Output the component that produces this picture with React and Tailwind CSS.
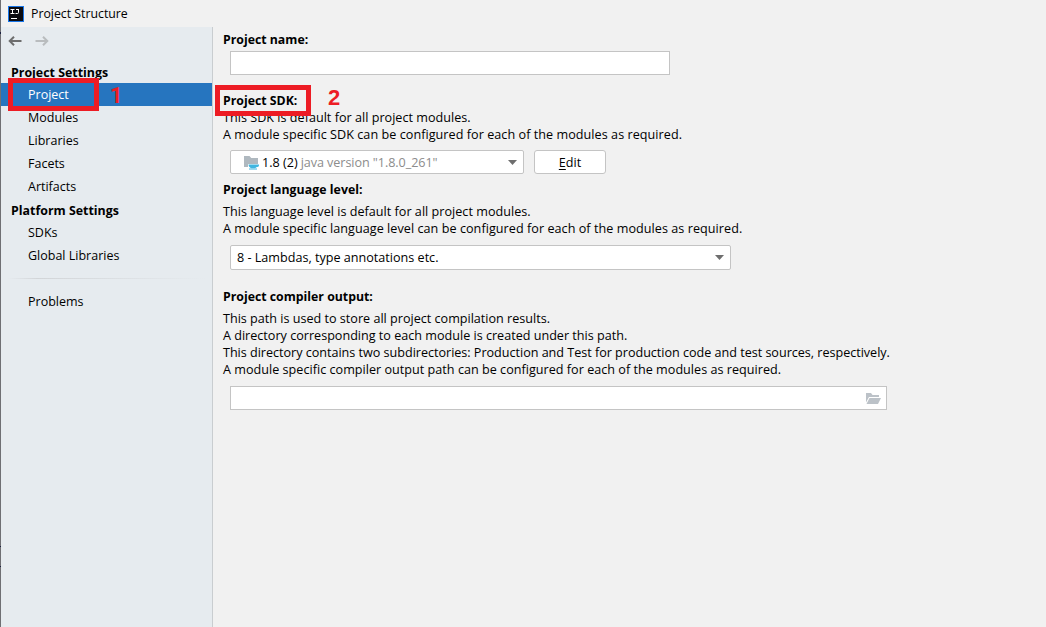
const projectItems = ['Project', 'Modules', 'Libraries', 'Facets', 'Artifacts'];
const platformItems = ['SDKs', 'Global Libraries'];

function NavItem({ label, active }) {
  return (
    <li
      className={`h-[23px] pl-[27px] text-[12.5px] leading-[23px] ${
        active ? 'bg-[#2675bf] text-white' : 'text-black'
      }`}
    >
      {label}
    </li>
  );
}

function Arrow({ className, flip }) {
  return (
    <svg width="14" height="12" viewBox="0 0 14 12" className={`${className} ${flip ? '-scale-x-100' : ''}`}>
      <path d="M13.5 6H1.8M6 1.7 1.7 6 6 10.3" fill="none" stroke="currentColor" strokeWidth="2" />
    </svg>
  );
}

function Caret() {
  return (
    <svg width="9" height="5" viewBox="0 0 9 5" className="shrink-0">
      <path d="M0 0h9L4.5 5z" fill="#6e6e6e" />
    </svg>
  );
}

function AppLogo() {
  return (
    <svg width="16" height="16" viewBox="0 0 16 16">
      <rect width="16" height="16" fill="#1875e8" />
      <rect x="1" y="1" width="14" height="14" fill="#0b0b10" />
      <path
        d="M2.5 3.5h4M4.5 3.5v4M2.5 7.5h4M8 3.5h3M10.5 3v3.5q0 1-1 1H7.5"
        fill="none"
        stroke="#fff"
        strokeWidth="1"
      />
      <path d="M3 12.5h6" stroke="#fff" strokeWidth="1" />
    </svg>
  );
}

function JdkIcon() {
  return (
    <svg width="16" height="15" viewBox="0 0 16 15" className="shrink-0">
      <path d="M0 1h5.5l1.7 2H14v6H4v3H0z" fill="#afb8bf" />
      <path d="M4.5 9.5H15q.5 2.5-2.7 2.7-.8 1-1.8 1H7.5q-2.6-.5-3-3.7z" fill="#40b6e0" />
      <path d="M5 14h8" stroke="#40b6e0" strokeWidth="1" />
    </svg>
  );
}

function FolderIcon() {
  return (
    <svg width="15" height="12" viewBox="0 0 15 12" className="mt-px shrink-0">
      <path d="M0 0h5l1.5 2H13v2H3L0 9.5z" fill="#bcc2c8" />
      <path d="M3.5 5H15l-3 6H.5z" fill="#bcc2c8" />
    </svg>
  );
}

function Label({ children }) {
  return <h2 className="h-[17px] text-[12.3px] leading-[17px] font-bold">{children}</h2>;
}

export default function App() {
  return (
    <div className="relative flex h-[627px] w-[1046px] overflow-hidden bg-[#f1f1f1] font-['Open_Sans','Noto_Sans',sans-serif] whitespace-nowrap text-black">
      {/* Sliver of the window behind */}
      <div className="w-px shrink-0 bg-[#6f6f73]">
        <div className="mt-[32px] h-[2px] bg-[#1b2140]" />
        <div className="mt-[512px] h-px bg-[#1b2140]" />
        <div className="mt-[19px] h-px bg-[#1b2140]" />
      </div>

      <div className="flex flex-1 flex-col">
        {/* Title bar */}
        <header className="flex h-[27px] shrink-0 items-center pl-[7px]">
          <AppLogo />
          <span className="pt-px pl-[7px] text-[12.3px]">Project Structure</span>
        </header>

        <div className="flex flex-1">
          {/* Sidebar */}
          <nav className="w-[212px] shrink-0 border-r border-[#c9cdd0] bg-[#e6ebef]">
            <div className="flex h-[28px] items-center gap-[13px] pl-[7px]">
              <Arrow className="text-[#6e6e6e]" />
              <Arrow className="text-[#b9bcbe]" flip />
            </div>
            <h3 className="mt-[5px] h-[23px] pl-[10px] text-[12.4px] leading-[26px] font-bold">Project Settings</h3>
            <ul>
              {projectItems.map((item) => (
                <NavItem key={item} label={item} active={item === 'Project'} />
              ))}
            </ul>
            <h3 className="h-[23px] pl-[10px] text-[12.4px] leading-[25px] font-bold">Platform Settings</h3>
            <ul>
              {platformItems.map((item) => (
                <NavItem key={item} label={item} />
              ))}
            </ul>
            <div className="flex h-[23px] items-center pl-[7px]">
              <div className="h-px w-[198px] bg-linear-to-r from-transparent via-[#d2d5d8] via-15% to-transparent" />
            </div>
            <ul>
              <NavItem label="Problems" />
            </ul>
          </nav>

          {/* Project page */}
          <main className="flex-1 pt-[4px] pl-[10px] text-[12.6px] leading-[17px]">
            <Label>Project name:</Label>
            <div className="mt-[3px] ml-[7px] h-[24px] w-[440px] border border-[#c4c4c4] bg-white" />

            <div className="mt-[17px]">
              <Label>Project SDK:</Label>
            </div>
            <p className="tracking-[0.02px]">This SDK is default for all project modules.</p>
            <p className="tracking-[0.05px]">
              A module specific SDK can be configured for each of the modules as required.
            </p>
            <div className="mt-[7px] ml-[7px] flex gap-[10px]">
              <div className="flex h-[24px] w-[294px] items-center rounded-[2px] border border-[#c4c4c4] bg-white pr-[6px] pl-[13px]">
                <JdkIcon />
                <span className="pl-[2px]">1.8 (2)</span>
                <span className="flex-1 pl-[3px] tracking-[-0.06px] text-[#8c8c8c]">java version "1.8.0_261"</span>
                <Caret />
              </div>
              <button className="h-[24px] w-[72px] rounded-[3px] border border-[#c4c4c4] bg-white">
                <span className="underline underline-offset-2">E</span>dit
              </button>
            </div>

            <div className="mt-[7px] tracking-[0.05px]">
              <Label>Project language level:</Label>
            </div>
            <div className="mt-[5px]">
              <p className="tracking-[0.02px]">This language level is default for all project modules.</p>
              <p className="tracking-[0.05px]">
                A module specific language level can be configured for each of the modules as required.
              </p>
            </div>
            <div className="mt-[8px] ml-[7px] flex h-[25px] w-[501px] items-center justify-between rounded-[2px] border border-[#c4c4c4] bg-white pr-[6px] pl-[6px]">
              <span>8 - Lambdas, type annotations etc.</span>
              <Caret />
            </div>

            <div className="mt-[18px]">
              <Label>Project compiler output:</Label>
            </div>
            <div className="mt-[5px]">
              <p>This path is used to store all project compilation results.</p>
              <p>A directory corresponding to each module is created under this path.</p>
              <p className="tracking-[-0.02px]">
                This directory contains two subdirectories: Production and Test for production code and test sources,
                respectively.
              </p>
              <p className="tracking-[0.02px]">
                A module specific compiler output path can be configured for each of the modules as required.
              </p>
            </div>
            <div className="mt-[8px] ml-[7px] flex h-[24px] w-[657px] items-center justify-end border border-[#c4c4c4] bg-white pr-[5px]">
              <FolderIcon />
            </div>
          </main>
        </div>
      </div>

      {/* Step markers */}
      <div className="absolute top-[78px] left-[8px] h-[33px] w-[91px] border-5 border-[#ed1c24]" />
      <span className="absolute top-[84px] left-[110px] font-[Roboto,sans-serif] text-[22px] leading-[24px] font-bold text-[#ed1c24]">
        1
      </span>
      <div className="absolute top-[85px] left-[215px] h-[31px] w-[96px] border-5 border-[#ed1c24]" />
      <span className="absolute top-[86px] left-[328px] font-['Liberation_Sans',sans-serif] text-[22px] leading-[24px] font-bold text-[#ed1c24]">
        2
      </span>
    </div>
  );
}
